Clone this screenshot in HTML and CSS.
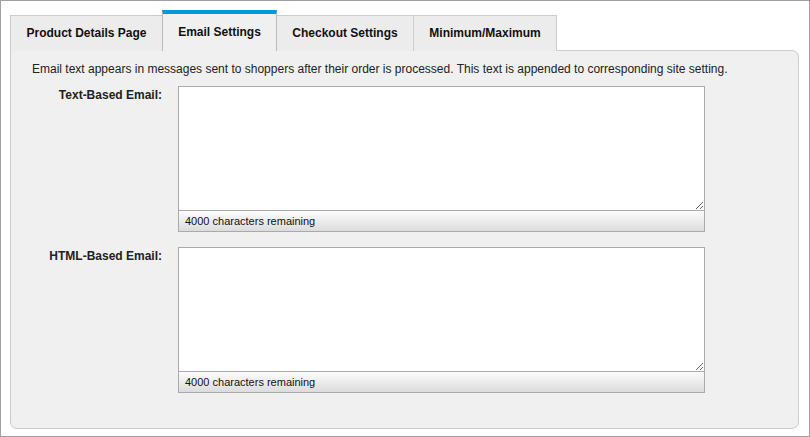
FILE: index.html
```html
<!DOCTYPE html>
<html>
<head>
<meta charset="utf-8">
<link rel="stylesheet" href="styles.css">
</head>
<body>
<div class="frame">
  <div class="tabs">
    <div class="tab t1">Product Details Page</div>
    <div class="tab active t2">Email Settings</div>
    <div class="tab t3">Checkout Settings</div>
    <div class="tab t4">Minimum/Maximum</div>
  </div>
  <div class="panel">
    <p class="desc">Email text appears in messages sent to shoppers after their order is processed. This text is appended to corresponding site setting.</p>
    <div class="row">
      <label class="label">Text-Based Email:</label>
      <div class="field">
        <textarea class="area"></textarea>
        <div class="counter">4000 characters remaining</div>
      </div>
    </div>
    <div class="row">
      <label class="label">HTML-Based Email:</label>
      <div class="field">
        <textarea class="area"></textarea>
        <div class="counter">4000 characters remaining</div>
      </div>
    </div>
  </div>
</div>
</body>
</html>
```
FILE: styles.css
```css
html, body {
  margin: 0;
  padding: 0;
  background: #fff;
}
body {
  font-family: "Liberation Sans", Arial, sans-serif;
  color: #222;
}
.frame {
  box-sizing: border-box;
  width: 810px;
  height: 437px;
  border: 1px solid #a0a0a0;
  padding: 9px 11px 0 9px;
}
.tabs {
  display: flex;
  align-items: flex-end;
  position: relative;
  z-index: 1;
  margin-bottom: -1px;
}
.tab {
  box-sizing: border-box;
  height: 36px;
  border: 1px solid #ccc;
  border-right: none;
  border-bottom: none;
  background: #ececec;
  font-size: 12px;
  font-weight: bold;
  display: flex;
  align-items: center;
  justify-content: center;
  padding-bottom: 2px;
  color: #111;
}
.t1 { width: 152px; }
.t2 { width: 115px; }
.t3 { width: 136px; }
.t4 { width: 144px; border-right: 1px solid #ccc; }
.tab.active {
  height: 41px;
  border-top: 4px solid #0099d8;
  border-left: 1px solid #bbb;
  border-right: 1px solid #bbb;
  background: #f0f0f0;
  padding-bottom: 2px;
}
.tab.active + .tab { border-left: none; }
.panel {
  box-sizing: border-box;
  width: 789px;
  height: 379px;
  background: #f0f0f0;
  border: 1px solid #ccc;
  border-radius: 0 7px 7px 7px;
  padding: 11px 0 0 0;
}
.desc {
  margin: 0 0 9px 21px;
  font-size: 12px;
  line-height: 15px;
}
.row {
  display: flex;
  margin-bottom: 15px;
}
.label {
  width: 151px;
  text-align: right;
  font-size: 12px;
  font-weight: bold;
  padding-top: 2px;
  line-height: 15px;
  margin-right: 16px;
}
.field {
  width: 527px;
  display: flex;
  flex-direction: column;
}
.area {
  box-sizing: border-box;
  display: block;
  width: 527px;
  height: 125px;
  margin: 0;
  border: 1px solid #aaa;
  background: #fff;
  resize: vertical;
  outline: none;
}
.counter {
  box-sizing: border-box;
  height: 22px;
  margin-top: -1px;
  border: 1px solid #aaa;
  background: linear-gradient(#fcfcfc, #dcdcdc);
  font-size: 11px;
  line-height: 20px;
  padding-left: 6px;
  color: #111;
}
```
